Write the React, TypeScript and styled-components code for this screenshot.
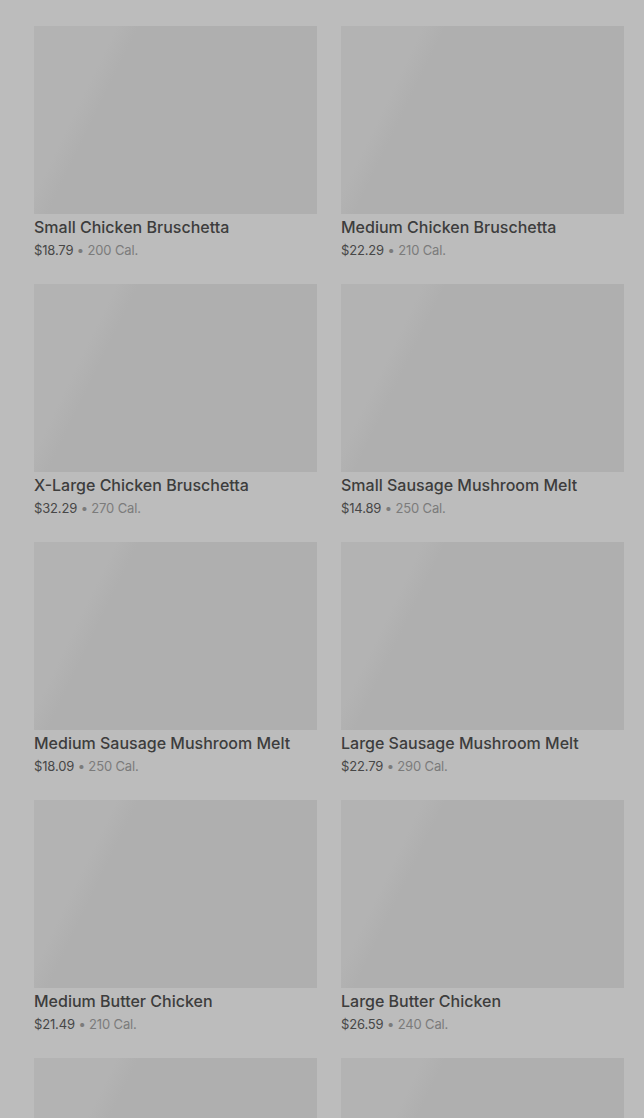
import React from "react";
import styled, {createGlobalStyle} from "styled-components";

const GlobalStyle = createGlobalStyle`
  html, body {
    margin: 0;
    padding: 0;
    background: #bcbcbc;
    overflow: hidden;
    font-family: Inter, Roboto, "Liberation Sans", sans-serif;
  }
`;

const Page = styled.div`
  padding: 26px 20px 0 34px;
  height: 1118px;
  box-sizing: border-box;
  overflow: hidden;
`;

const Grid = styled.div`
  display: grid;
  grid-template-columns: 283px 283px;
  column-gap: 24px;
  row-gap: 25px;
`;

const Card = styled.div`
  display: flex;
  flex-direction: column;
`;

const Thumb = styled.div`
  height: 188px;
  background: linear-gradient(
    116deg,
    #b3b3b3 0%,
    #b3b3b3 22%,
    #afafaf 28%,
    #afafaf 100%
  );
`;

const Name = styled.div`
  margin-top: 3px;
  font-size: 16px;
  line-height: 20px;
  font-weight: 500;
  color: #3d3d3d;
  white-space: nowrap;
`;

const Meta = styled.div`
  margin-top: 4px;
  font-size: 13px;
  line-height: 18px;
  letter-spacing: -0.15px;
  color: #7b7b7b;
`;

const Price = styled.span`
  color: #474747;
`;

interface Item {
  name: string;
  price: string;
  cal: number;
}

const items: Item[] = [
  {name: "Small Chicken Bruschetta", price: "$18.79", cal: 200},
  {name: "Medium Chicken Bruschetta", price: "$22.29", cal: 210},
  {name: "X-Large Chicken Bruschetta", price: "$32.29", cal: 270},
  {name: "Small Sausage Mushroom Melt", price: "$14.89", cal: 250},
  {name: "Medium Sausage Mushroom Melt", price: "$18.09", cal: 250},
  {name: "Large Sausage Mushroom Melt", price: "$22.79", cal: 290},
  {name: "Medium Butter Chicken", price: "$21.49", cal: 210},
  {name: "Large Butter Chicken", price: "$26.59", cal: 240},
  {name: "", price: "", cal: 0},
  {name: "", price: "", cal: 0},
];

const App = () => {
  return (
    <>
      <GlobalStyle />
      <Page>
        <Grid>
          {items.map((item, index) => (
            <Card key={index}>
              <Thumb />
              {item.name && (
                <>
                  <Name>{item.name}</Name>
                  <Meta>
                    <Price>{item.price}</Price> • {item.cal} Cal.
                  </Meta>
                </>
              )}
            </Card>
          ))}
        </Grid>
      </Page>
    </>
  );
};

export default App;
